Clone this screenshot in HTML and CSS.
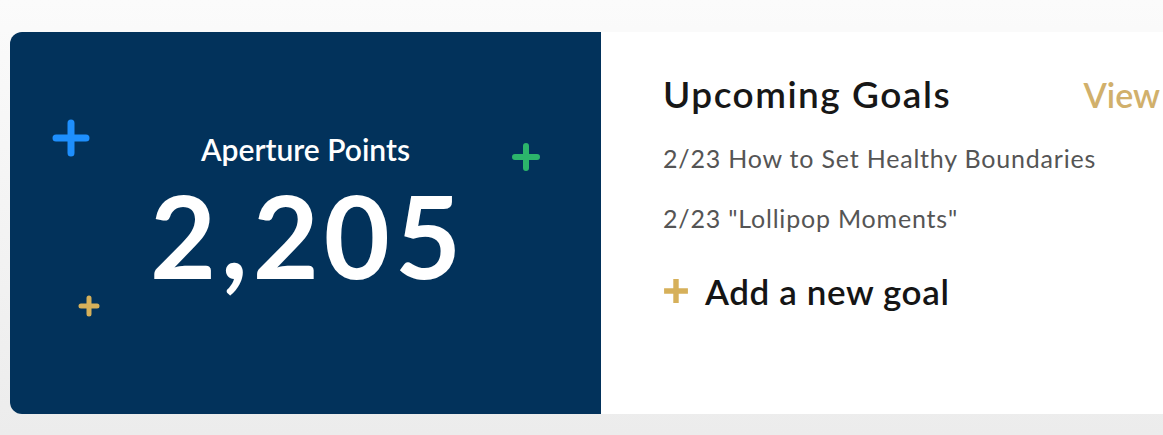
FILE: index.html
```html
<!DOCTYPE html>
<html lang="en">
<head>
    <meta charset="UTF-8">
    <meta name="viewport" content="width=device-width, initial-scale=1.0">
    <title>Dashboard</title>
    <link rel="stylesheet" href="styles.css">
</head>
<body>
    <div class="summary-card">
        <!-- Points panel -->
        <div class="points">
            <svg class="spark spark-blue" viewBox="0 0 38 38"><path d="M19 4v30M4 19h30"/></svg>
            <svg class="spark spark-green" viewBox="0 0 28 28"><path d="M14 3v22M3 14h22"/></svg>
            <svg class="spark spark-gold" viewBox="0 0 22 22"><path d="M11 3v16M3 11h16"/></svg>
            <div class="points-label">Aperture Points</div>
            <div class="points-value">2,205</div>
        </div>

        <!-- Goals panel -->
        <div class="goals">
            <div class="goals-header">
                <h2>Upcoming Goals</h2>
                <a class="view-link" href="#">View</a>
            </div>
            <ul class="goal-list">
                <li>2/23 How to Set Healthy Boundaries</li>
                <li>2/23 "Lollipop Moments"</li>
            </ul>
            <button class="add-goal">
                <svg class="add-icon" viewBox="0 0 24 24"><path d="M12 1v22M1 12h22"/></svg>
                Add a new goal
            </button>
        </div>
    </div>
</body>
</html>
```

FILE: styles.css
```css
* {
    box-sizing: border-box;
    font-family: 'Lato', 'Noto Sans', sans-serif;
}

body {
    margin: 0;
    padding: 32px 0 0 10px;
    height: 435px;
    overflow: hidden;
    background: linear-gradient(#fbfbfb, #ececec);
}

.summary-card {
    display: flex;
    width: 1200px;
    height: 382px;
    border-radius: 12px;
    overflow: hidden;
    background: white;
}

.points {
    position: relative;
    width: 591px;
    flex-shrink: 0;
    background-color: #02325b;
    color: white;
    text-align: center;
    padding-top: 99px;
}

.points-label {
    font-size: 30px;
    font-weight: 600;
    line-height: 36px;
}

.points-value {
    font-size: 114px;
    font-weight: 700;
    line-height: 110px;
    letter-spacing: 5px;
    text-indent: 5px;
    margin-top: 13px;
}

.spark {
    position: absolute;
    fill: none;
    stroke-linecap: round;
}

.spark-blue {
    left: 42px;
    top: 87px;
    width: 38px;
    height: 38px;
    stroke: #1e8ffd;
    stroke-width: 7;
}

.spark-green {
    left: 502px;
    top: 111px;
    width: 28px;
    height: 28px;
    stroke: #2cb56b;
    stroke-width: 6;
}

.spark-gold {
    left: 68px;
    top: 263px;
    width: 22px;
    height: 22px;
    stroke: #d6b05a;
    stroke-width: 5;
}

.goals {
    flex: 1;
    padding: 40px 50px 0 62px;
}

.goals-header {
    display: flex;
    justify-content: space-between;
    align-items: baseline;
}

.goals-header h2 {
    margin: 0;
    font-size: 37px;
    font-weight: 600;
    line-height: 44px;
    letter-spacing: 1.5px;
    color: #171717;
}

.view-link {
    font-size: 34px;
    font-weight: 600;
    color: #d1b06b;
    text-decoration: none;
}

.goal-list {
    list-style: none;
    margin: 27px 0 0;
    padding: 0;
}

.goal-list li {
    font-size: 25px;
    color: #555;
    line-height: 30px;
    letter-spacing: 0.8px;
    margin-bottom: 30px;
}

.add-goal {
    display: flex;
    align-items: center;
    gap: 16px;
    margin-top: 38px;
    padding: 0;
    border: none;
    background: none;
    font-size: 35px;
    font-weight: 600;
    line-height: 40px;
    letter-spacing: 0.6px;
    color: #151515;
    cursor: pointer;
}

.add-icon {
    width: 26px;
    height: 26px;
    fill: none;
    stroke: #d6b05a;
    stroke-width: 5;
}
```
